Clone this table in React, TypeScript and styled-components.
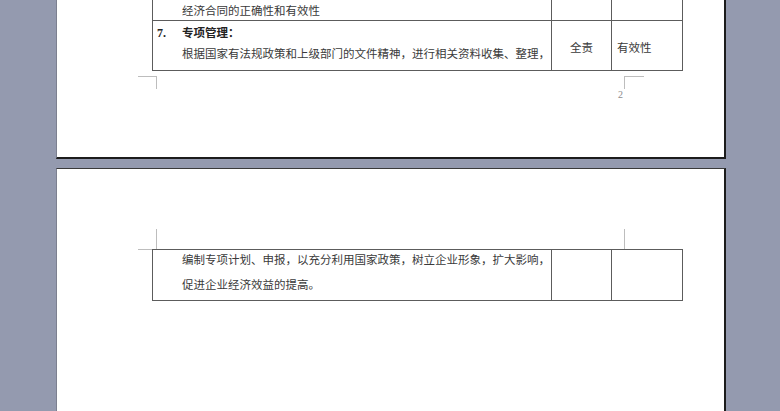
import React from "react";
import styled, { createGlobalStyle } from "styled-components";

const GlobalStyle = createGlobalStyle`
  html, body {
    margin: 0;
    padding: 0;
    background: #949aaf;
    overflow: hidden;
  }
  body {
    font-family: "Noto Sans CJK SC", "Noto Sans", sans-serif;
  }
`;

const Viewer = styled.div`
  width: 780px;
  height: 411px;
  overflow: hidden;
  display: flex;
  flex-direction: column;
`;

const Page = styled.div<{ $top: number; $h: number }>`
  flex-shrink: 0;
  margin-left: 56px;
  margin-top: ${(p) => p.$top}px;
  width: 667px;
  height: ${(p) => p.$h}px;
  background: #ffffff;
  border-left: 1px solid #7c8090;
  border-top: 1px solid #3a3a3a;
  border-right: 2px solid #1c1c1c;
  border-bottom: 2px solid #1c1c1c;
  display: flex;
  flex-direction: column;
`;

const Table = styled.div<{ $mt: number }>`
  margin-left: 95px;
  margin-top: ${(p) => p.$mt}px;
  width: 531px;
  box-sizing: border-box;
  border-left: 1px solid #5c5c5c;
  border-top: 1px solid #5c5c5c;
`;

const Row = styled.div`
  display: grid;
  grid-template-columns: 399px 60px 71px;
  border-bottom: 1px solid #5c5c5c;
`;

const Cell = styled.div<{ $pad?: string; $center?: boolean; $vcenter?: boolean }>`
  box-sizing: border-box;
  border-right: 1px solid #5c5c5c;
  padding: ${(p) => p.$pad ?? "0"};
  display: flex;
  flex-direction: column;
  justify-content: ${(p) => (p.$center || p.$vcenter ? "center" : "flex-start")};
  align-items: ${(p) => (p.$center ? "center" : "flex-start")};
  color: #3a3a3a;
  font-size: 11.5px;
`;

const Line = styled.div<{ $lh: number; $mt?: number }>`
  line-height: ${(p) => p.$lh}px;
  margin-top: ${(p) => p.$mt ?? 0}px;
  white-space: nowrap;
`;

const HeadLine = styled.div`
  display: flex;
  align-items: baseline;
  height: 21px;
  line-height: 21px;
  margin-left: -25px;
`;

const Num = styled.span`
  width: 25px;
  font-family: "Liberation Serif", serif;
  font-weight: bold;
  font-size: 12px;
  color: #222;
`;

const Heading = styled.span`
  font-weight: bold;
  font-size: 11.5px;
  color: #222;
`;

const MarkRow = styled.div<{ $mt: number; $h: number }>`
  margin-left: 81px;
  margin-top: ${(p) => p.$mt}px;
  width: 506px;
  height: ${(p) => p.$h}px;
  display: flex;
  justify-content: space-between;
  flex-shrink: 0;
`;

const Mark = styled.div<{ $side: "left" | "right"; $edge: "top" | "bottom" }>`
  width: ${(p) => (p.$side === "left" ? 19 : 20)}px;
  height: 100%;
  box-sizing: border-box;
  ${(p) =>
    p.$side === "left"
      ? "border-right: 1px solid #bdbdbd;"
      : "border-left: 1px solid #bdbdbd;"}
  ${(p) =>
    p.$edge === "top"
      ? "border-top: 1px solid #bdbdbd;"
      : "border-bottom: 1px solid #bdbdbd;"}
`;

const Footer = styled.div`
  margin-left: 561px;
  height: 12px;
  line-height: 12px;
  font-family: "Liberation Serif", serif;
  font-size: 10px;
  color: #8c8c8c;
`;

export default function App() {
  return (
    <>
      <GlobalStyle />
      <Viewer>
        <Page $top={-40} $h={196}>
          <Table $mt={9}>
            <Row>
              <Cell $pad="29px 0 0 29px">
                <Line $lh={20}>经济合同的正确性和有效性</Line>
              </Cell>
              <Cell />
              <Cell />
            </Row>
            <Row>
              <Cell $pad="1px 0 6px 29px">
                <HeadLine>
                  <Num>7.</Num>
                  <Heading>专项管理：</Heading>
                </HeadLine>
                <Line $lh={21}>
                  根据国家有法规政策和上级部门的文件精神，进行相关资料收集、整理，
                </Line>
              </Cell>
              <Cell $center $pad="2px 0 0 0">
                <Line $lh={20}>全责</Line>
              </Cell>
              <Cell $vcenter $pad="2px 0 0 5px">
                <Line $lh={20}>有效性</Line>
              </Cell>
            </Row>
          </Table>
          <MarkRow $mt={5} $h={13}>
            <Mark $side="left" $edge="top" />
            <Mark $side="right" $edge="top" />
          </MarkRow>
          <Footer>2</Footer>
        </Page>
        <Page $top={9} $h={400}>
          <MarkRow $mt={60} $h={21}>
            <Mark $side="left" $edge="bottom" />
            <Mark $side="right" $edge="bottom" />
          </MarkRow>
          <Table $mt={-1}>
            <Row>
              <Cell $pad="0 0 3px 29px">
                <Line $lh={25} $mt={-3}>
                  编制专项计划、申报，以充分利用国家政策，树立企业形象，扩大影响，
                </Line>
                <Line $lh={25}>促进企业经济效益的提高。</Line>
              </Cell>
              <Cell />
              <Cell />
            </Row>
          </Table>
        </Page>
      </Viewer>
    </>
  );
}
